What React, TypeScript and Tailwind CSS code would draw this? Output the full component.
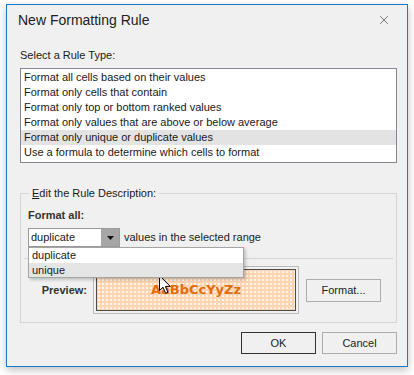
import { X } from "lucide-react"

const ruleTypes = [
  "Format all cells based on their values",
  "Format only cells that contain",
  "Format only top or bottom ranked values",
  "Format only values that are above or below average",
  "Format only unique or duplicate values",
  "Use a formula to determine which cells to format",
]

const selectedRule = 4

function Cursor() {
  return (
    <svg width="13" height="20" viewBox="0 0 13 20" className="absolute left-[159px] top-[275px]">
      <path
        d="M0.5 0.5 L0.5 15.5 L4 12.2 L6.6 18.3 L8.9 17.3 L6.4 11.4 L11.2 11.4 Z"
        fill="#ffffff"
        stroke="#000000"
        strokeWidth="1"
        strokeLinejoin="round"
      />
    </svg>
  )
}

export default function App() {
  return (
    <div
      className="relative w-[414px] h-[375px] bg-white pl-[6px] pt-[4px] text-[11px] text-[#1a1a1a]"
      style={{ fontFamily: '"Liberation Sans", Arial, sans-serif' }}
    >
      <div className="w-[402px] h-[363px] border border-[#1979ca] bg-[#f0f0f0] shadow-[0_3px_8px_rgba(0,0,0,0.25)]">
        {/* Title bar */}
        <div className="h-[30px] flex items-center justify-between pl-[11px] pr-[16px]">
          <span className="text-[14px] text-[#222]">New Formatting Rule</span>
          <X className="w-[14px] h-[14px] text-[#444]" strokeWidth={1.2} />
        </div>

        <div className="pl-[13px] pr-[10px]">
          <div className="mt-[13px] h-[15px] leading-[15px]">Select a Rule Type:</div>

          {/* Rule type list */}
          <div className="mt-[5px] h-[95px] border border-[#828790] bg-white pt-px">
            {ruleTypes.map((rule, i) => (
              <div
                key={rule}
                className={`h-[15px] leading-[15px] pl-[3px] ${i === selectedRule ? "bg-[#e3e3e3]" : ""}`}
              >
                {rule}
              </div>
            ))}
          </div>

          {/* Edit the rule description */}
          <fieldset className="mt-[23px] h-[137px] border border-[#d5d5d5] px-[3px]">
            <legend className="ml-[5px] px-[3px] leading-[15px]">
              <span className="underline">E</span>dit the Rule Description:
            </legend>
            <div className="pl-[4px] mt-[7px] h-[15px] leading-[15px] font-bold text-[#333]">Format all:</div>

            <div className="relative pl-[4px] mt-[5px] flex items-center gap-[4px]">
              <div className="flex w-[92px] h-[19px] border border-[#9a9a9a] bg-white">
                <div className="flex-1 pl-[2px] leading-[17px]">duplicate</div>
                <div className="w-[18px] bg-[#a6a6a6] flex items-center justify-center">
                  <svg width="7" height="4" viewBox="0 0 7 4">
                    <path d="M0 0 H7 L3.5 4 Z" fill="#111" />
                  </svg>
                </div>
              </div>
              <span>values in the selected range</span>

              {/* Open dropdown */}
              <div className="absolute left-[4px] top-[19px] z-10 w-[216px] h-[31px] border border-[#a5a5a5] bg-white shadow-[2px_2px_3px_rgba(0,0,0,0.2)]">
                <div className="h-[15px] leading-[15px] pl-[3px]">duplicate</div>
                <div className="h-[14px] leading-[14px] pl-[3px] bg-[#e5e5e5]">unique</div>
              </div>
            </div>

            <div className="mt-[11px] h-px bg-[#d5d5d5]" />

            {/* Preview */}
            <div className="mt-[7px] flex items-center">
              <span className="w-[69px] pr-[6px] text-right font-bold text-[#333]">Preview:</span>
              <div className="w-[206px] h-[48px] border border-[#bcbcbc] p-[2px]">
                <div className="h-full border border-[#4a4a4a] bg-[#fcd5b4] bg-[radial-gradient(circle,#fff6ee_0.7px,transparent_1px)] bg-[length:4px_4px] flex items-center justify-center">
                  <span
                    className="font-bold text-[13px] text-[#e36c09]"
                    style={{ fontFamily: '"DejaVu Sans", Verdana, sans-serif' }}
                  >
                    AaBbCcYyZz
                  </span>
                </div>
              </div>
              <button className="ml-[7px] w-[75px] h-[23px] border border-[#adadad] bg-[#f0f0f0] text-[#222]">
                Format...
              </button>
            </div>
          </fieldset>

          {/* Buttons */}
          <div className="mt-[9px] flex justify-end gap-[6px]">
            <button className="w-[75px] h-[22px] border border-[#333] bg-[#f0f0f0] text-[#222]">OK</button>
            <button className="w-[75px] h-[22px] border border-[#adadad] bg-[#f0f0f0] text-[#222]">Cancel</button>
          </div>
        </div>
      </div>
      <Cursor />
    </div>
  )
}
